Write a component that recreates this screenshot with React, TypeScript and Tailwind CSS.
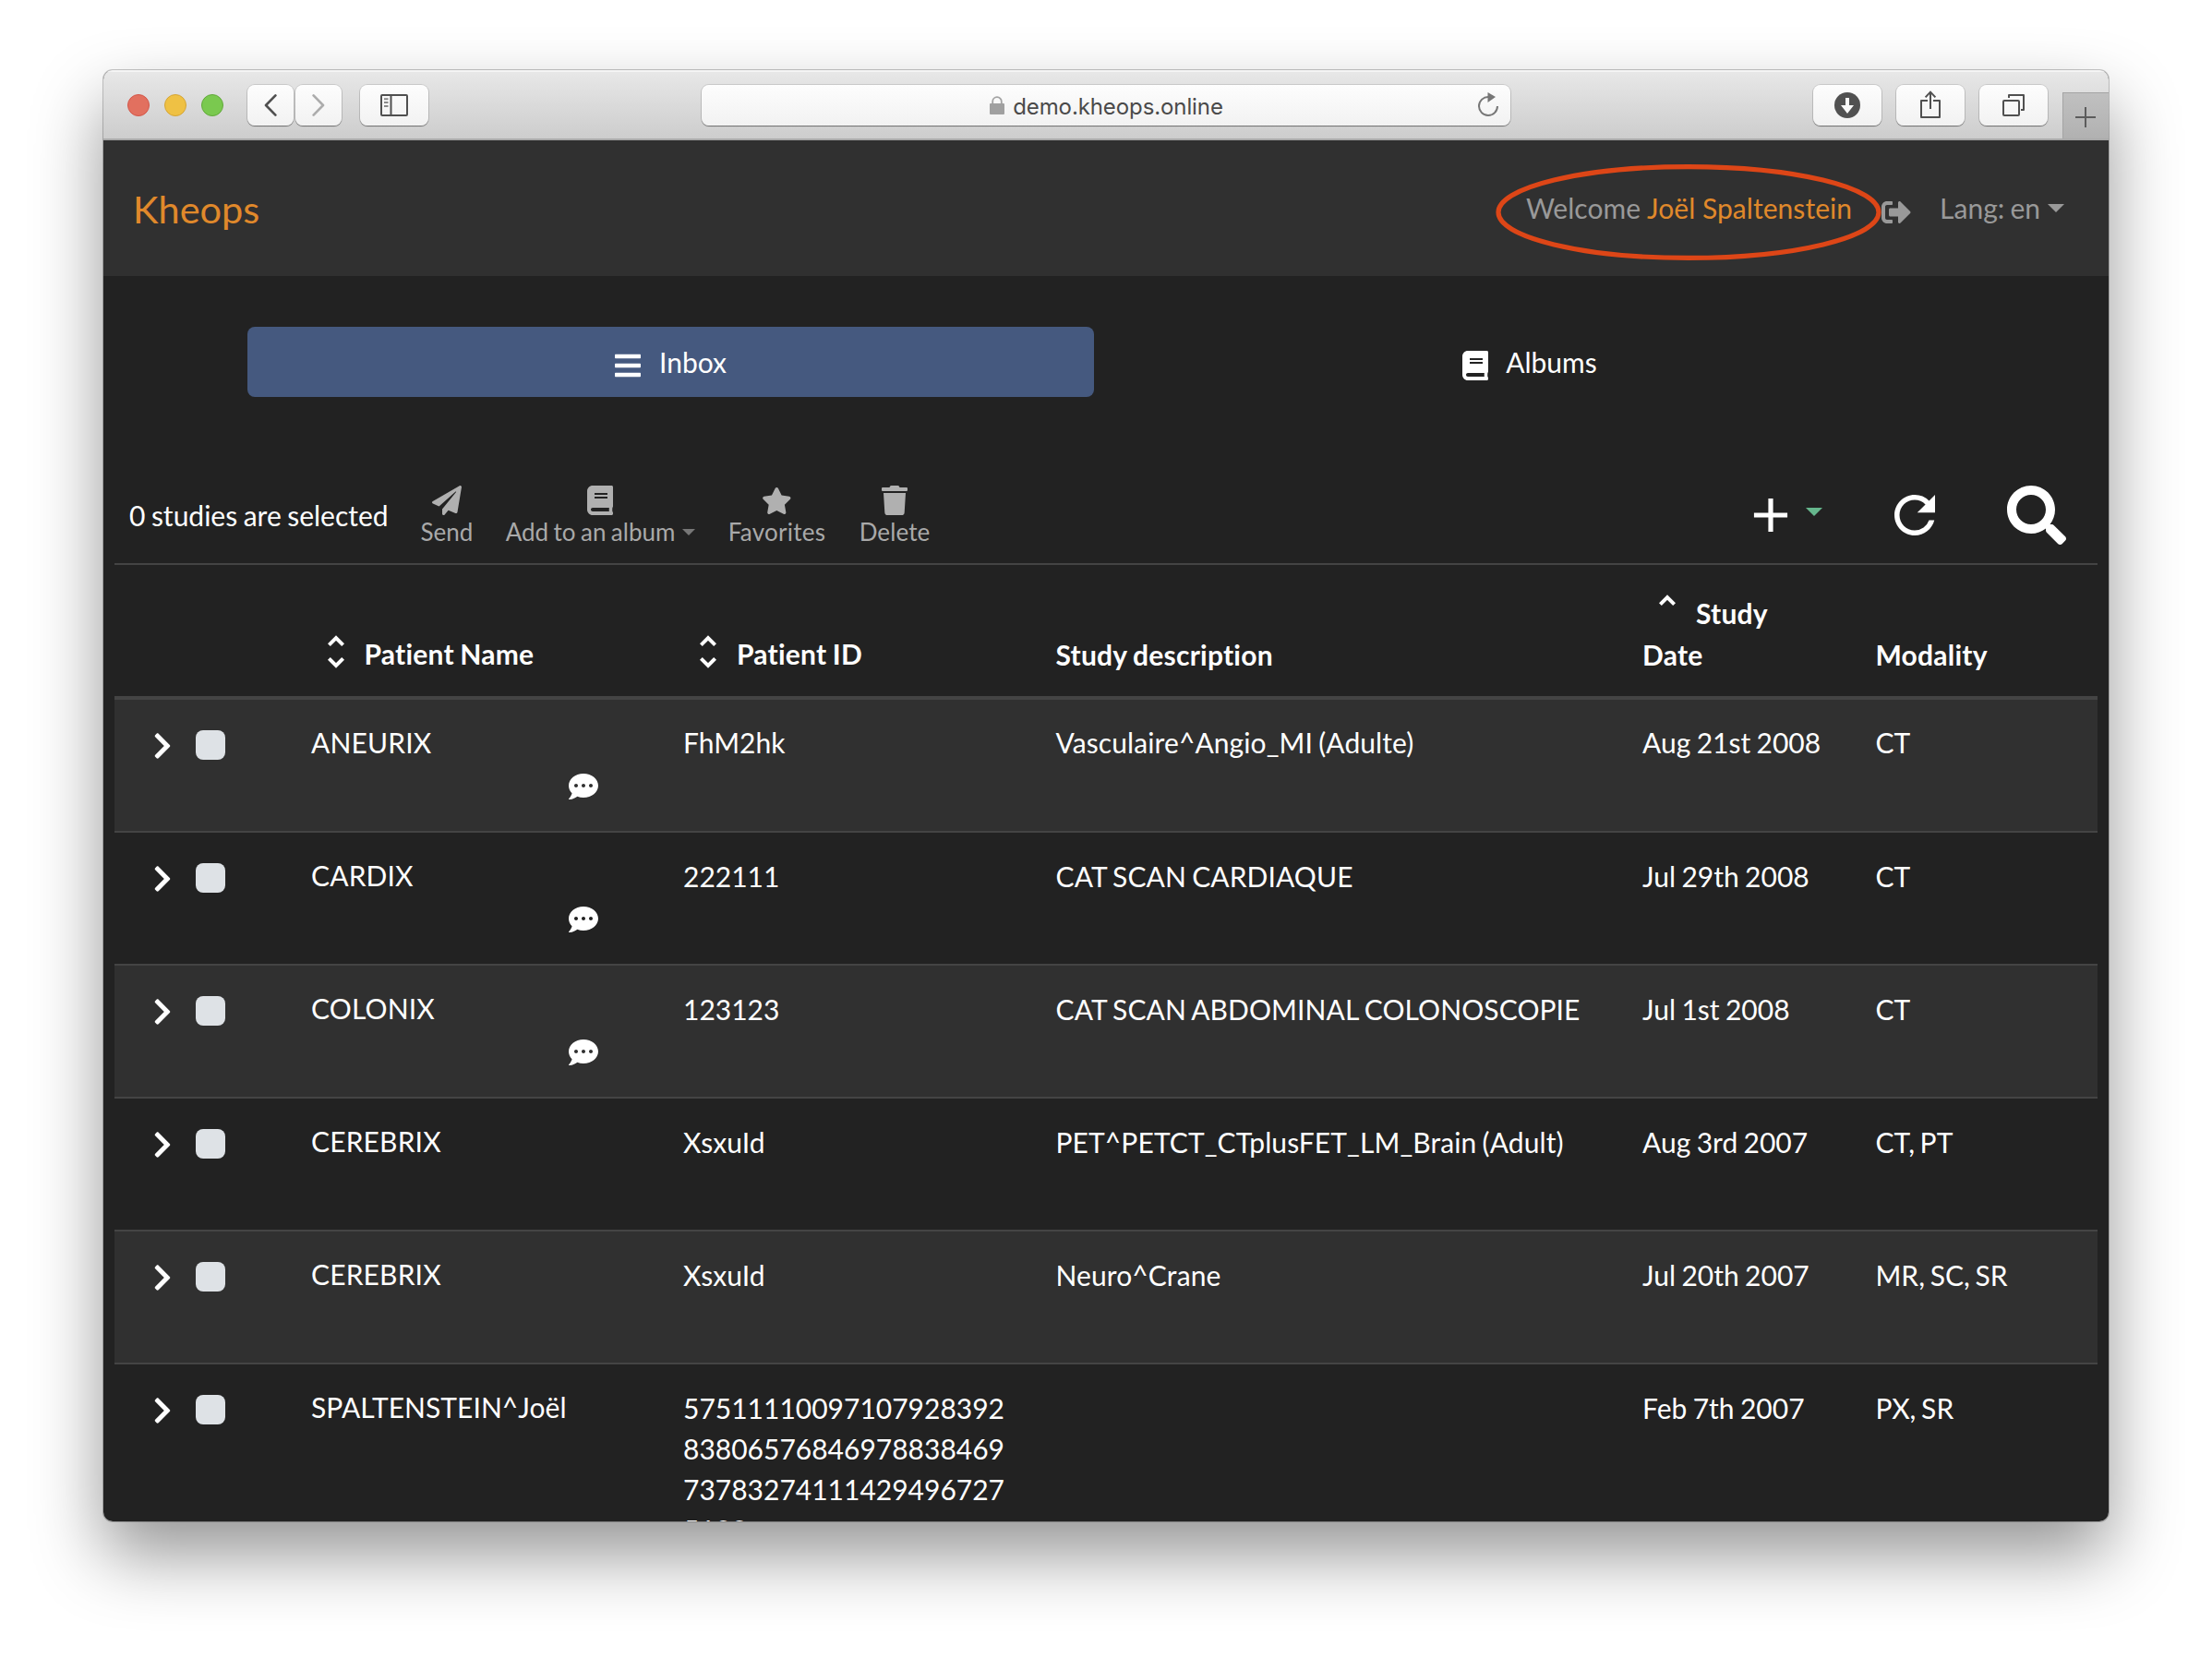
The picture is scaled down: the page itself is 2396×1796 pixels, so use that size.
import type { ReactNode } from "react";
import {
  FaBars,
  FaBook,
  FaChevronRight,
  FaCommentDots,
  FaPaperPlane,
  FaSearch,
  FaSignOutAlt,
  FaStar,
  FaTrash,
} from "react-icons/fa";
import { MdAdd, MdRefresh } from "react-icons/md";

type Study = {
  name: string;
  id: string;
  description: string;
  date: string;
  modality: string;
  commented: boolean;
};

const studies: Study[] = [
  { name: "ANEURIX", id: "FhM2hk", description: "Vasculaire^Angio_MI (Adulte)", date: "Aug 21st 2008", modality: "CT", commented: true },
  { name: "CARDIX", id: "222111", description: "CAT SCAN CARDIAQUE", date: "Jul 29th 2008", modality: "CT", commented: true },
  { name: "COLONIX", id: "123123", description: "CAT SCAN ABDOMINAL COLONOSCOPIE", date: "Jul 1st 2008", modality: "CT", commented: true },
  { name: "CEREBRIX", id: "XsxuId", description: "PET^PETCT_CTplusFET_LM_Brain (Adult)", date: "Aug 3rd 2007", modality: "CT, PT", commented: false },
  { name: "CEREBRIX", id: "XsxuId", description: "Neuro^Crane", date: "Jul 20th 2007", modality: "MR, SC, SR", commented: false },
  {
    name: "SPALTENSTEIN^Joël",
    id: "5751111009710792839283806576846978838469737832741114294967275199",
    description: "",
    date: "Feb 7th 2007",
    modality: "PX, SR",
    commented: false,
  },
];

const columns = "grid grid-cols-[213px_403px_403.5px_635.5px_252.5px_1fr]";

function ToolbarButton({ className, children }: { className: string; children: ReactNode }) {
  return (
    <div
      className={`mt-px flex h-[44px] items-center justify-center rounded-[8px] bg-linear-to-b from-[#fdfdfd] to-[#f2f2f2] shadow-[0_0_0_1px_rgba(0,0,0,0.11),0_1px_1px_rgba(0,0,0,0.4)] ${className}`}
    >
      {children}
    </div>
  );
}

function Caret({ className }: { className: string }) {
  return (
    <svg viewBox="0 0 18 9" className={className} fill="currentColor">
      <path d="M0 0h18l-9 9z" />
    </svg>
  );
}

function SortIcon({ down = true }: { down?: boolean }) {
  return (
    <svg viewBox="0 0 18 36" className="mb-[6px] h-[36px] w-[18px] shrink-0" fill="none" stroke="currentColor" strokeWidth="4">
      <path d="M1.4 10.6 9 3l7.6 7.6" />
      {down && <path d="M1.4 25.4 9 33l7.6-7.6" />}
    </svg>
  );
}

function BrowserBar() {
  return (
    <div className="flex h-[76px] shrink-0 items-center border-b-2 border-[#a9a9a9] bg-linear-to-b from-[#e8e8e8] to-[#cdcdcd] pl-[26px] shadow-[inset_0_2px_0_#f4f4f4]">
      <div className="mt-[2px] flex gap-4">
        <div className="size-[24px] rounded-full border border-[#d3574a] bg-[#e2705f]" />
        <div className="size-[24px] rounded-full border border-[#d5a536] bg-[#efc144]" />
        <div className="size-[24px] rounded-full border border-[#62a93b] bg-[#7ac94f]" />
      </div>
      <ToolbarButton className="ml-[26px] w-[50px]">
        <svg viewBox="0 0 14 24" className="h-[24px] w-[14px]" fill="none" stroke="#505050" strokeWidth="2.6" strokeLinecap="round" strokeLinejoin="round">
          <path d="M12.4 1.4 2 12l10.4 10.6" />
        </svg>
      </ToolbarButton>
      <ToolbarButton className="ml-[2px] w-[50px]">
        <svg viewBox="0 0 14 24" className="h-[24px] w-[14px]" fill="none" stroke="#acacac" strokeWidth="2.6" strokeLinecap="round" strokeLinejoin="round">
          <path d="M1.6 1.4 12 12 1.6 22.6" />
        </svg>
      </ToolbarButton>
      <ToolbarButton className="ml-[20px] w-[74px]">
        <svg viewBox="0 0 30 24" className="h-[24px] w-[30px]" fill="none" stroke="#505050" strokeWidth="2">
          <rect x="1" y="1" width="28" height="22" rx="1" />
          <path d="M11.5 1v22" />
          <path d="M4 5.2h4.5M4 9h4.5M4 13h4.5" stroke="#8a8a8a" />
        </svg>
      </ToolbarButton>
      <ToolbarButton className="ml-[296px] w-[876px]">
        <div className="flex flex-1 items-center justify-center gap-[9px] pl-[36px]">
          <svg viewBox="0 0 16 20" className="h-[20px] w-[16px]">
            <path d="M3.2 9V6a4.8 4.8 0 0 1 9.6 0v3" fill="none" stroke="#a3a3a3" strokeWidth="1.8" />
            <rect y="8" width="16" height="12" rx="1" fill="#a0a0a0" />
          </svg>
          <span className="mt-[4px] font-[Inter,sans-serif] text-[24px] leading-[30px] tracking-[-0.1px] text-[#4a4a4a]">demo.kheops.online</span>
        </div>
        <svg viewBox="0 0 22 26" className="mr-[13px] mb-[2px] h-[26px] w-[22px]" fill="none">
          <path d="M11.5 5A10 10 0 1 0 21 15" stroke="#777" strokeWidth="2" />
          <path d="M10.5 0v11l8.5-6z" fill="#777" />
        </svg>
      </ToolbarButton>
      <ToolbarButton className="ml-[328px] w-[74px]">
        <svg viewBox="0 0 28 28" className="size-[28px]">
          <circle cx="14" cy="14" r="14" fill="#515151" />
          <path d="M12 6h4v8h5l-7 9-7-9h5z" fill="#fafafa" />
        </svg>
      </ToolbarButton>
      <ToolbarButton className="ml-[16px] w-[74px]">
        <svg viewBox="0 0 22 30" className="mb-[2px] h-[30px] w-[22px]" fill="none" stroke="#505050" strokeWidth="2">
          <path d="M8 11H1v18h20V11h-7" strokeLinejoin="round" />
          <path d="M11 20V1.6M5.6 7.4 11 1.6l5.4 5.8" />
        </svg>
      </ToolbarButton>
      <ToolbarButton className="ml-[16px] w-[74px]">
        <svg viewBox="0 0 24 24" className="size-[24px]" fill="none" stroke="#505050" strokeWidth="2" strokeLinejoin="round">
          <rect x="1" y="7" width="17" height="16" rx="1" />
          <path d="M7 4V1h16v16h-3" />
        </svg>
      </ToolbarButton>
      <div className="ml-auto flex h-[50px] w-[50px] items-center justify-center self-end border-t border-l border-[#a4a4a4] bg-linear-to-b from-[#c0c0c0] to-[#b1b1b1]">
        <svg viewBox="0 0 22 22" className="mt-[3px] mr-px size-[22px]" stroke="#5c5c5c" strokeWidth="2">
          <path d="M11 0v22M0 11h22" />
        </svg>
      </div>
    </div>
  );
}

function Navbar() {
  return (
    <nav className="flex h-[147px] shrink-0 items-center bg-[#303030] pr-[48px] pl-[32px] text-[#999]">
      <span className="text-[41.5px] leading-[60px] text-[#e0892b]">Kheops</span>
      <div className="relative mb-[2px] ml-auto tracking-[0.05px]">
        <span>
          Welcome <span className="text-[#e0892b]">Joël Spaltenstein</span>
        </span>
        <svg viewBox="0 0 420 106" className="absolute top-[-26px] left-[-34px] h-[106px] w-[420px]" fill="none">
          <ellipse cx="210" cy="53" rx="206" ry="49.4" stroke="#dd4617" strokeWidth="5.2" />
        </svg>
      </div>
      <FaSignOutAlt className="mt-[8px] ml-[32px] size-[32px]" />
      <span className="mb-[2px] ml-[31px] [word-spacing:-1.5px]">Lang: en</span>
      <Caret className="mb-px ml-[8px] h-[9px] w-[18px]" />
    </nav>
  );
}

function Action({ icon, label, className }: { icon: ReactNode; label: ReactNode; className: string }) {
  return (
    <div className={`flex flex-col items-center text-[26px] leading-[37px] whitespace-nowrap text-[#a9a9a9] ${className}`}>
      <div className="flex h-[32px] items-center text-[#b0b0b0]">{icon}</div>
      <div className="flex items-center">{label}</div>
    </div>
  );
}

function ActionBar() {
  return (
    <div className="flex h-[86px] items-start pt-[2px] pl-[16px]">
      <span className="mt-[10px] w-[316px] [word-spacing:-1.2px]">0 studies are selected</span>
      <Action className="w-[56px]" icon={<FaPaperPlane className="size-[32px]" />} label="Send" />
      <Action
        className="ml-[36px] w-[205px]"
        icon={<FaBook className="mr-px h-[32px] w-[28px]" />}
        label={
          <>
            <span className="[word-spacing:-1.2px]">Add to an album</span>
            <Caret className="ml-[8px] h-[7px] w-[14px] text-[#777]" />
          </>
        }
      />
      <Action className="ml-[36px] w-[105px] tracking-[0.25px]" icon={<FaStar className="h-[29px] w-[32.6px]" />} label="Favorites" />
      <Action className="ml-[37px] w-[76px] tracking-[0.1px]" icon={<FaTrash className="h-[32px] w-[28px]" />} label="Delete" />
      <div className="ml-auto flex h-[64px] items-center pr-[34px] text-white">
        <MdAdd className="size-[62px]" />
        <Caret className="mb-[7px] ml-[7px] h-[9px] w-[18px] text-[#66b78d]" />
        <MdRefresh className="ml-[67px] size-[66px]" />
        <FaSearch className="ml-[67px] size-[64px]" />
      </div>
    </div>
  );
}

function TableHeader() {
  return (
    <div className={`${columns} h-[148px] items-end border-t-2 border-b-4 border-[#444] pb-[22px] leading-[45px] font-bold tracking-[0.22px] [word-spacing:-1px]`}>
      <div />
      <div className="flex items-center pb-px pl-[18px]">
        <SortIcon />
        <span className="ml-[21.5px]">Patient Name</span>
      </div>
      <div className="flex items-center pb-px pl-[18px]">
        <SortIcon />
        <span className="ml-[22px]">Patient ID</span>
      </div>
      <div>Study description</div>
      <div>
        <div className="flex items-center pl-[18px]">
          <SortIcon down={false} />
          <span className="ml-[22px]">Study</span>
        </div>
        Date
      </div>
      <div>Modality</div>
    </div>
  );
}

function StudyRow({ study }: { study: Study }) {
  return (
    <div className={`group ${columns} h-[144px] shrink-0 border-t-2 border-[#444] pt-[24px] odd:bg-[#303030] first:h-[142px] first:border-t-0 last:h-[230px]`}>
      <div className="flex items-start pl-[42px]">
        <FaChevronRight className="mt-[10px] h-[32px] w-[20px]" />
        <div className="mt-[9px] ml-[26px] size-[32px] rounded-[8px] bg-[#dee2e6]" />
      </div>
      <div>
        <div className="tracking-[0.15px] group-last:tracking-[0.05px]">{study.name}</div>
        {study.commented && <FaCommentDots className="mt-[10px] ml-[279px] size-[32px]" />}
      </div>
      <div className="w-[356px] pt-px break-all group-first:pt-0">{study.id}</div>
      <div className="pt-px tracking-[0.1px] [word-spacing:-1.6px] group-first:pt-0">{study.description}</div>
      <div className="pt-px [word-spacing:-1.3px] group-first:pt-0">{study.date}</div>
      <div className="pt-px [word-spacing:-2px] group-first:pt-0">{study.modality}</div>
    </div>
  );
}

export default function App() {
  return (
    <div className="h-[1796px] w-[2396px] overflow-hidden bg-white px-[112px] pt-[76px]">
      <div className="rounded-[10px] shadow-[0_0_0_1px_rgba(0,0,0,0.22),0_36px_76px_rgba(0,0,0,0.42)]">
        <div className="flex h-[1572px] w-[2172px] flex-col overflow-hidden rounded-[10px] bg-[#222] font-[Lato,sans-serif] text-[30px] leading-[44px] text-white">
          <BrowserBar />
          <Navbar />
          <div className="mt-[55px] flex shrink-0 px-[156px]">
            <div className="flex h-[76px] w-[917px] items-center justify-center gap-[20px] rounded-[8px] bg-[#45597f]">
              <FaBars className="mt-[7px] h-[32px] w-[28px]" />
              <span>Inbox</span>
            </div>
            <div className="flex h-[76px] w-[943px] items-center justify-center gap-[19px] pl-px">
              <FaBook className="mt-[7px] h-[32px] w-[28px]" />
              <span>Albums</span>
            </div>
          </div>
          <main className="mt-[94px] flex flex-col px-[12px]">
            <ActionBar />
            <TableHeader />
            <div className="flex flex-col">
              {studies.map((study, index) => (
                <StudyRow key={index} study={study} />
              ))}
            </div>
          </main>
        </div>
      </div>
    </div>
  );
}
